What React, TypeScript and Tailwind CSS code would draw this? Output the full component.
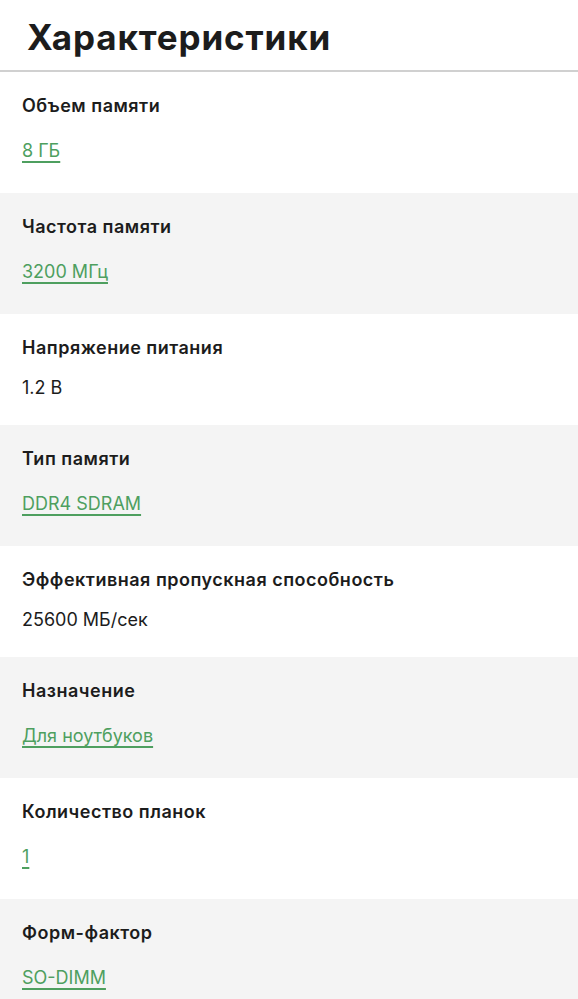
import React from "react";

type Row = { label: string; value: string; link: boolean };

const rows: Row[] = [
  { label: "Объем памяти", value: "8 ГБ", link: true },
  { label: "Частота памяти", value: "3200 МГц", link: true },
  { label: "Напряжение питания", value: "1.2 В", link: false },
  { label: "Тип памяти", value: "DDR4 SDRAM", link: true },
  { label: "Эффективная пропускная способность", value: "25600 МБ/сек", link: false },
  { label: "Назначение", value: "Для ноутбуков", link: true },
  { label: "Количество планок", value: "1", link: true },
  { label: "Форм-фактор", value: "SO-DIMM", link: true },
];

export default function App() {
  return (
    <div
      className="w-[578px] min-h-[999px] bg-white text-[#1c1c1c]"
      style={{ fontFamily: "Inter, 'Noto Sans', sans-serif" }}
    >
      <div className="h-[72px] pl-[27px] pt-[14px] border-b-2 border-[#d0d0d0]">
        <h1 className="text-[35px] leading-[46px] font-bold tracking-[0.9px]">Характеристики</h1>
      </div>
      {rows.map((r, i) => (
        <div
          key={r.label}
          className={`px-[22px] pt-[23px] ${r.link ? "pb-[27px]" : "pb-[26px]"} ${i % 2 === 1 ? "bg-[#f4f4f4]" : "bg-white"}`}
        >
          <div className="text-[18px] leading-[22px] font-semibold tracking-[0.5px]">{r.label}</div>
          {r.link ? (
            <div className="mt-[23px] mb-[4px] text-[18px] leading-[22px]">
              <a
                href="#"
                className="text-[#4e9f5f] underline underline-offset-[4px] decoration-[1.5px]"
              >
                {r.value}
              </a>
            </div>
          ) : (
            <div className="mt-[18px] text-[18px] leading-[22px]">{r.value}</div>
          )}
        </div>
      ))}
    </div>
  );
}
